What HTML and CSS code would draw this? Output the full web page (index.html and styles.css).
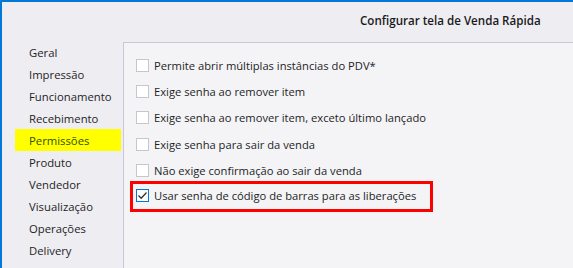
FILE: index.html
```html
<!DOCTYPE html>
<html lang="pt-br">
<head>
  <meta charset="UTF-8">
  <meta name="viewport" content="width=device-width, initial-scale=1.0">
  <title>Configurar tela de Venda Rápida</title>
  <link rel="stylesheet" href="styles.css">
</head>
<body>
  <div class="window">
    <header class="title-bar">
      <h1>Configurar tela de Venda Rápida</h1>
    </header>
    <div class="content">
      <nav class="menu">
        <div class="menu-item">Geral</div>
        <div class="menu-item">Impressão</div>
        <div class="menu-item">Funcionamento</div>
        <div class="menu-item">Recebimento</div>
        <div class="menu-item selected">Permissões</div>
        <div class="menu-item">Produto</div>
        <div class="menu-item">Vendedor</div>
        <div class="menu-item">Visualização</div>
        <div class="menu-item">Operações</div>
        <div class="menu-item">Delivery</div>
      </nav>
      <main class="panel">
        <label class="option"><span class="check"></span>Permite abrir múltiplas instâncias do PDV*</label>
        <label class="option"><span class="check"></span>Exige senha ao remover item</label>
        <label class="option"><span class="check"></span>Exige senha ao remover item, exceto último lançado</label>
        <label class="option"><span class="check"></span>Exige senha para sair da venda</label>
        <label class="option"><span class="check"></span>Não exige confirmação ao sair da venda</label>
        <label class="option marked">
          <span class="check checked">
            <svg width="11" height="11" viewBox="0 0 11 11"><path d="M1.5 5.5 L4.2 8.2 L9.5 2.5" fill="none" stroke="#333" stroke-width="1.3"/></svg>
          </span>Usar senha de código de barras para as liberações
        </label>
      </main>
    </div>
  </div>
</body>
</html>
```

FILE: styles.css
```css
body {
  margin: 0;
  padding: 0;
  font-family: "Open Sans", "Noto Sans", Arial, sans-serif;
  color: #1e1e1e;
}

.window {
  box-sizing: border-box;
  width: 573px;
  height: 268px;
  background: #eeedf2;
  border-top: 2px solid #0078d7;
  border-left: 2px solid #0078d7;
  display: flex;
  flex-direction: column;
  overflow: hidden;
}

.title-bar {
  height: 40px;
  display: flex;
  align-items: center;
  padding-left: 358px;
}

.title-bar h1 {
  margin: 0;
  font-size: 11.6px;
  font-weight: 600;
  color: #1a1a1a;
  padding-bottom: 4px;
}

.content {
  flex: 1;
  display: flex;
}

.menu {
  width: 121px;
  margin-top: -1px;
}

.menu-item {
  height: 22px;
  line-height: 24px;
  font-size: 11.3px;
  margin-left: 13px;
  margin-right: 2px;
  padding-left: 14px;
}

.menu-item.selected {
  background: #ffff00;
  color: #2f4f0f;
}

.panel {
  flex: 1;
  background: #f4f4f7;
  border-top: 1px solid #c9c7dc;
  border-left: 1px solid #c9c7dc;
  padding-top: 8.5px;
  padding-left: 12px;
}

.option {
  display: flex;
  align-items: center;
  height: 26.3px;
  font-size: 11.2px;
  padding-top: 1px;
  box-sizing: border-box;
}

.check {
  box-sizing: border-box;
  width: 13px;
  height: 13px;
  background: #fff;
  border: 1px solid #c6c6ce;
  margin-right: 5px;
  display: flex;
  align-items: center;
  justify-content: center;
}

.check.checked {
  border-color: #0078d7;
}

.option.marked {
  width: 303px;
  height: 31px;
  margin-top: -2px;
  margin-left: -6px;
  padding-left: 3px;
  padding-top: 0;
  padding-bottom: 1px;
  border: 3px solid #ff0000;
}
```
